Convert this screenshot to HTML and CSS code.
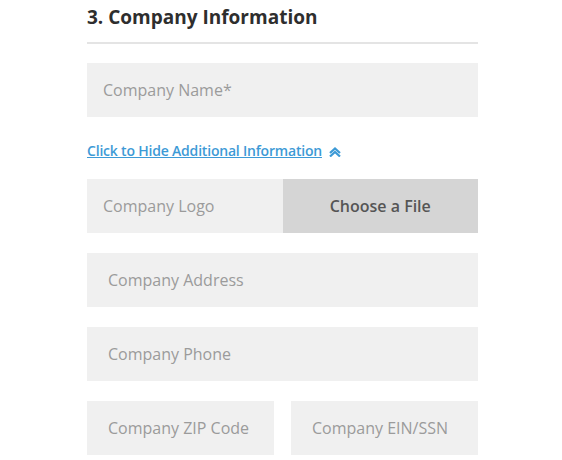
FILE: index.html
```html
<!DOCTYPE html>
<html>
<head>
<meta charset="utf-8">
<link rel="stylesheet" href="styles.css">
</head>
<body>
<section class="form">
  <h2 class="title">3. Company Information</h2>
  <div class="field pad-s">Company Name*</div>
  <a class="toggle" href="#">Click to Hide Additional Information</a><svg class="chev" width="14" height="10" viewBox="0 0 14 10"><path d="M2 6 L7 1.5 L12 6" fill="none" stroke="#3d9ad6" stroke-width="2.2"/><path d="M2 9.5 L7 5 L12 9.5" fill="none" stroke="#3d9ad6" stroke-width="2.2"/></svg>
  <div class="row split">
    <div class="field pad-s">Company Logo</div>
    <div class="file-btn">Choose a File</div>
  </div>
  <div class="field pad-l">Company Address</div>
  <div class="field pad-l">Company Phone</div>
  <div class="row pair">
    <div class="field pad-l">Company ZIP Code</div>
    <div class="field pad-l">Company EIN/SSN</div>
  </div>
</section>
</body>
</html>
```

FILE: styles.css
```css
html, body {
  margin: 0;
  padding: 0;
  background: #ffffff;
}

body {
  font-family: "Open Sans", "Liberation Sans", sans-serif;
}

.form {
  width: 391px;
  margin-left: 87px;
  padding-top: 3px;
}

.title {
  margin: 0;
  font-size: 19px;
  line-height: 28px;
  font-weight: 700;
  color: #2e2e2e;
  padding-bottom: 11px;
  border-bottom: 2px solid #e4e4e4;
  margin-bottom: 19px;
}

.field {
  height: 54px;
  display: flex;
  align-items: center;
  background: #f0f0f0;
  color: #9b9b9b;
  font-size: 16px;
  margin-bottom: 20px;
  box-sizing: border-box;
}

.pad-s { padding-left: 16px; }
.pad-l { padding-left: 21px; }

.toggle {
  display: inline-block;
  margin-top: 4px;
  font-size: 14px;
  line-height: 19px;
  font-weight: 600;
  color: #3d9ad6;
  text-decoration: underline;
  margin-bottom: 19px;
  letter-spacing: -0.2px;
}

.chev {
  margin-left: 6px;
  vertical-align: -1px;
}

.row {
  display: grid;
  grid-template-columns: 1fr 1fr;
  margin-bottom: 20px;
}

.row .field {
  margin-bottom: 0;
}

.split {
  gap: 0;
}

.pair {
  column-gap: 17px;
}

.file-btn {
  height: 54px;
  display: flex;
  align-items: center;
  justify-content: center;
  background: #d5d5d5;
  color: #555555;
  font-size: 16px;
  font-weight: 600;
}
```
